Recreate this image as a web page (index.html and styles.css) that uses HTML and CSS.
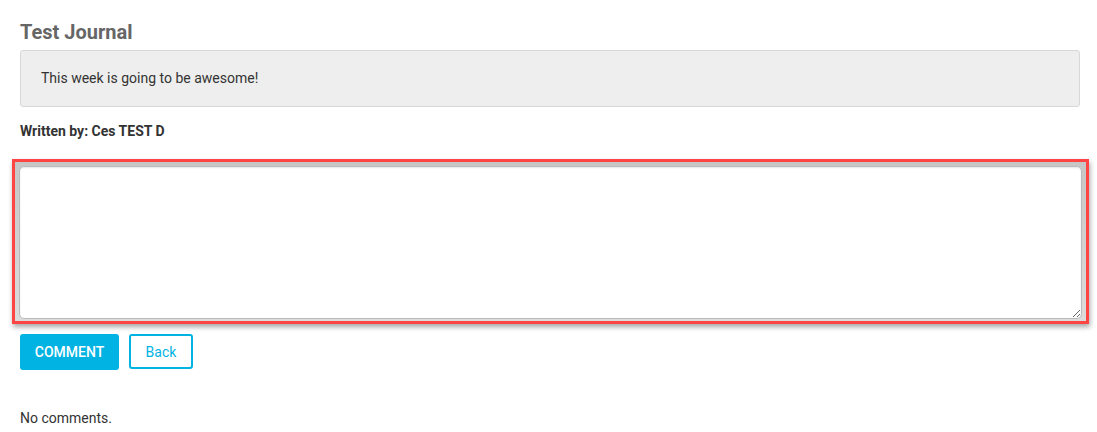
FILE: index.html
```html
<!DOCTYPE html>
<html>
<head>
<meta charset="utf-8">
<link rel="stylesheet" href="styles.css">
</head>
<body>
<div class="page">
  <h4 class="title">Test Journal</h4>
  <div class="entry">This week is going to be awesome!</div>
  <div class="author">Written by: Ces TEST D</div>
  <div class="highlight">
    <textarea class="comment-box"></textarea>
  </div>
  <div class="actions">
    <button class="btn btn-primary">COMMENT</button>
    <button class="btn btn-outline">Back</button>
  </div>
  <p class="empty">No comments.</p>
</div>
</body>
</html>
```

FILE: styles.css
```css
html, body {
  margin: 0;
  padding: 0;
  background: #fff;
}
body {
  font-family: Roboto, "Liberation Sans", sans-serif;
  font-size: 14px;
  color: #333;
}
.page {
  padding: 21px 17px 0 20px;
}
.title {
  margin: 0 0 7px 0;
  font-size: 20px;
  line-height: 22px;
  font-weight: 700;
  color: #666;
}
.entry {
  background: #eee;
  border: 1px solid #d8d8d8;
  border-radius: 3px;
  padding: 17px 20px 18px 20px;
  line-height: 20px;
}
.author {
  margin-top: 15px;
  font-size: 14px;
  font-weight: 700;
  line-height: 18px;
}
.highlight {
  margin: 19px -9px 0 -8px;
  border: 3px solid #f44;
  padding: 4px 4px 2px 4px;
  background: linear-gradient(#c6c6c6, #dcdcdc);
  box-shadow: 1px 3px 5px rgba(0,0,0,0.35);
  display: flex;
}
.comment-box {
  flex: 1;
  height: 153px;
  box-sizing: border-box;
  border: 1px solid #bbb;
  border-radius: 5px;
  background: #fff;
  margin: 0;
  padding: 6px;
  font-family: inherit;
  font-size: 14px;
  box-shadow: inset 0 1px 2px rgba(0,0,0,0.1);
}
.actions {
  display: flex;
  gap: 10px;
  margin-top: 10px;
  align-items: flex-start;
}
.btn {
  font-family: inherit;
  font-size: 14px;
  border-radius: 3px;
  height: 36px;
  margin: 0;
  cursor: pointer;
}
.btn-primary {
  background: #00b3e3;
  color: #fff;
  border: none;
  font-weight: 500;
  width: 99px;
  padding: 0;
}
.btn-outline {
  background: #fff;
  color: #00b3e3;
  border: 2px solid #00b3e3;
  height: 35px;
  width: 64px;
  padding: 0;
}
.empty {
  margin: 38px 0 0 0;
  line-height: 20px;
}
```
